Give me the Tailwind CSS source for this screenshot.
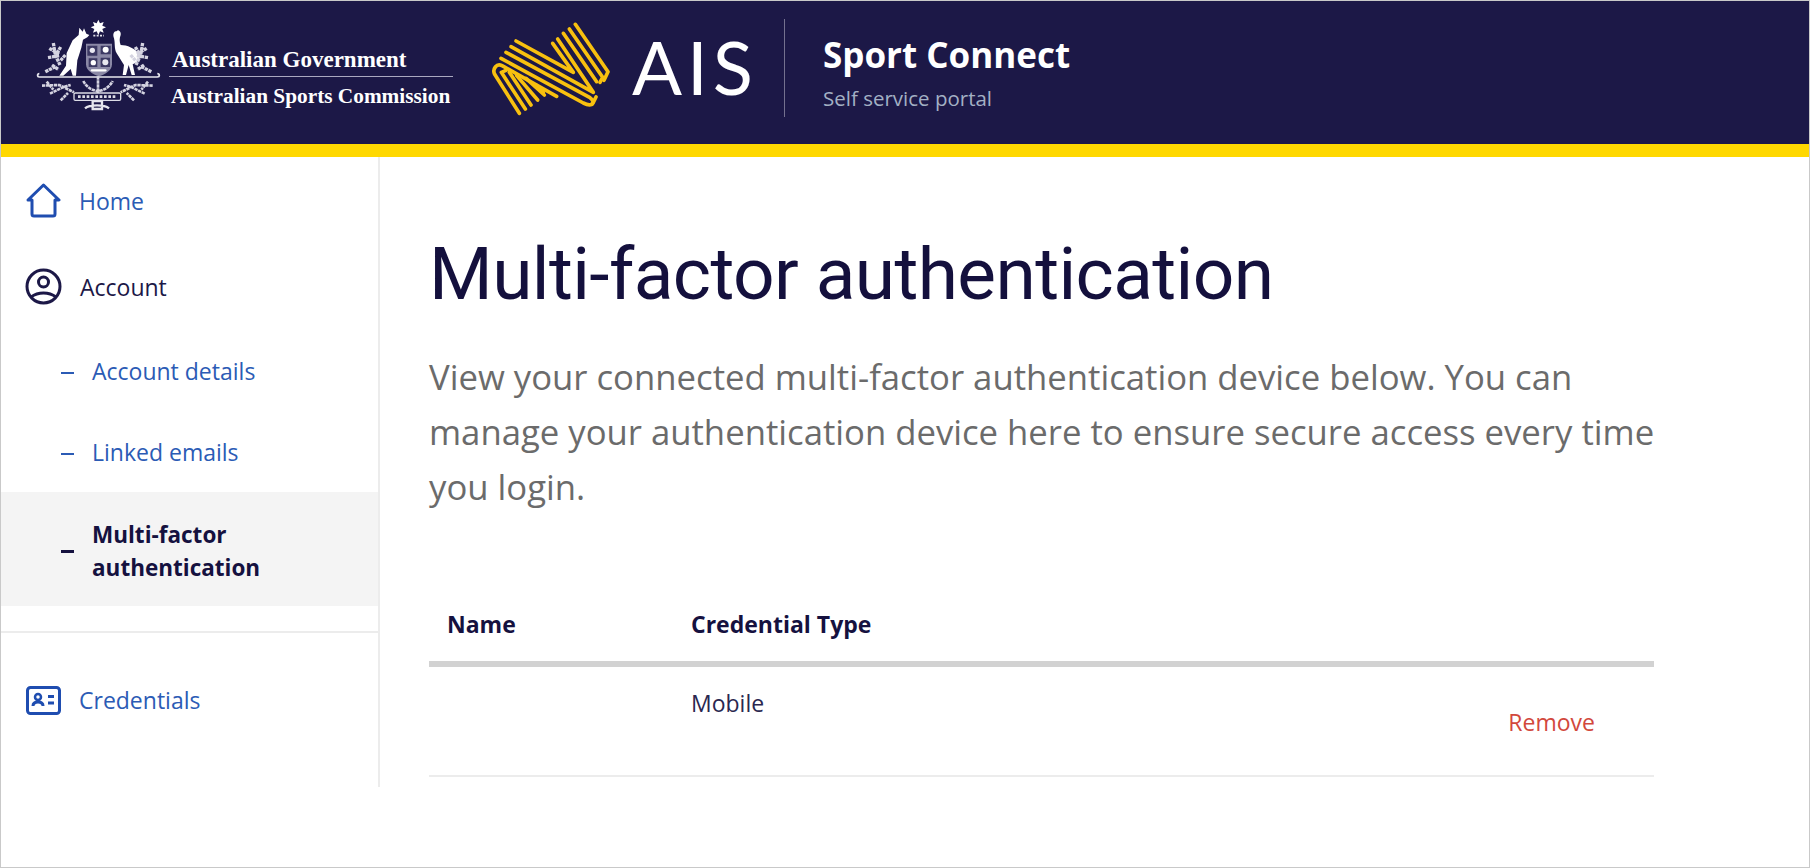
<!doctype html>
<html lang="en">
<head>
<meta charset="utf-8">
<title>Sport Connect</title>
<script src="https://cdn.jsdelivr.net/npm/@tailwindcss/browser@4"></script>
</head>
<body class="bg-white font-['Open_Sans','Noto_Sans',sans-serif]">
<div class="w-[1810px] h-[868px] border border-[#c9c9c9] overflow-hidden flex flex-col">
  <header class="h-[143px] shrink-0 bg-[#1c1847] flex items-center pl-[29px]">
    <svg class="w-[135px] h-[100px] shrink-0 -mt-[15px] blur-[0.5px]" viewBox="0 0 405 300" fill="none">
      <path d="M205 14l5 11 11-4-4 11 11 5-11 5 4 11-11-4-5 11-5-11-11 4 4-11-11-5 11-5-4-11 11 4z" fill="#fff"/>
      <path d="M190 62h32" stroke="#e4e4ec" stroke-width="5" stroke-dasharray="6 4"/>
      <path d="M148 38l10 12 4-10 7 16 9 4-6 7-13 7-5 24-12 38-4 46h-10l-6-20-22 20H88l20-30 2-38 18-38 18-16z" fill="#fff"/>
      <path d="M262 48c-12 0-14 10-10 22 4 15 0 30 8 45l22 35-4 30h10l8-30 9 30h10l-7-32c19-8 26-18 19-30-10-18-37-28-55-28-4-10-4-20 0-30 2-8-4-14-10-14z" fill="#fff"/>
      <path d="M168 86h78v62c0 18-20 30-39 36-19-6-39-18-39-36z" fill="#8b89a6"/>
      <path d="M172 92h30v30h-30zM212 92h30v26h-30zM176 130h26v26h-26zM212 128h28v28h-28z" fill="#3c3963"/>
      <circle cx="187" cy="106" r="8" fill="#e8e8f0"/><circle cx="227" cy="104" r="9" fill="#fff"/><circle cx="190" cy="143" r="8" fill="#fff"/><circle cx="226" cy="142" r="9" fill="#e8e8f0"/><path d="M186 166h40" stroke="#fff" stroke-width="7" stroke-linecap="round"/>
      <path d="M28 176c-7 0-7 10 0 10h354c8 0 8-10 0-10" stroke="#e6e6ee" stroke-width="5"/>
      <path d="M70 84l6 36 14 30M58 100l30 18M92 96l-14 24M54 128l34-6M46 170l32-16M106 120l-14 16M66 150l20 14M338 84l-6 36-14 30M350 100l-30 18M316 96l14 24M354 128l-34-6M364 170l-32-16M302 120l14 16M342 150l-20 14" stroke="#d4d3e0" stroke-width="10" stroke-dasharray="10 2"/>
      <path d="M36 212l52-2 44 22M60 236l40-20 22-6M92 256l22-22M50 200l20 24M368 212l-52-2-44 22M344 236l-40-20-22-6M312 256l-22-22M354 200l-20 24M204 184v60M160 198c10 20 30 30 44 30 14 0 34-10 44-30" stroke="#d4d3e0" stroke-width="8" stroke-dasharray="10 2"/>
      <rect x="132" y="234" width="140" height="22" rx="4" fill="#1c1847" stroke="#dcdce6" stroke-width="4"/>
      <path d="M144 245h116" stroke="#dcdce6" stroke-width="8" stroke-dasharray="8 5"/>
      <path d="M165 280c14-12 58-12 72 0M188 258h28v24h-28z" stroke="#e6e6ee" stroke-width="7"/>
    </svg>
    <div class="ml-[4px] w-[284px] h-[64px] text-white font-['Liberation_Serif',serif] font-bold mt-[11px] shrink-0 flex flex-col">
      <div class="h-[31px] pl-[3px] text-[23px] leading-[28px] border-b border-[#aaa8c0] whitespace-nowrap">Australian Government</div>
      <div class="pl-[2px] pt-[5px] text-[21.300px] leading-[28px] whitespace-nowrap">Australian Sports Commission</div>
    </div>
    <svg class="w-[130px] h-[105px] ml-[33px] shrink-0 -mt-[10px] blur-[0.3px]" viewBox="0 0 390 315" fill="none" stroke="#f8c00f" stroke-width="11" stroke-linecap="round" stroke-linejoin="round">
      <path d="M90 78L262 172L200 85"/>
      <path d="M75 95L322 232L215 72"/>
      <path d="M60 112L312 248Q326 258 318 268"/>
      <path d="M45 130L292 264Q316 276 322 262L330 246"/>
      <path d="M232 55L332 200"/>
      <path d="M250 42L350 187L342 202"/>
      <path d="M268 28L366 170L354 196"/>
      <path d="M100 295L26 178Q20 166 28 156Q36 146 48 152L212 244"/>
      <path d="M118 282L46 172L60 166"/>
      <path d="M135 270L70 172"/>
      <path d="M155 255L92 182"/>
      <path d="M175 240L120 190"/>
      <path d="M150 210L172 232"/>
    </svg>
    <div class="ml-[16px] w-[118px] -mt-[12px] text-white text-[74px] leading-none font-['Lato',sans-serif] font-normal tracking-[5px] shrink-0">AIS</div>
    <div class="ml-[34px] w-px h-[98px] bg-[#74718f] -mt-[10px] shrink-0"></div>
    <div class="ml-[38px] mt-[2px]">
      <div class="text-white font-bold text-[35px] leading-[40px] whitespace-nowrap">Sport Connect</div>
      <div class="text-[#a3b0c4] text-[20.500px] leading-[28px] mt-[9px] whitespace-nowrap">Self service portal</div>
    </div>
  </header>
  <div class="h-[13px] shrink-0 bg-[#ffd800]"></div>
  <div class="flex items-start">
    <aside class="w-[379px] h-[630px] shrink-0 border-r-2 border-[#ececec] text-[23px]">
      <a class="h-[87px] pl-[25px] pt-[1px] flex items-center gap-[18px] text-[#2b5bb5]">
        <svg class="w-[35px] h-[35px] shrink-0 -mt-[1px]" viewBox="0 0 35 35" fill="none" stroke="#1f4db0" stroke-width="3" stroke-linejoin="round" stroke-linecap="round"><path d="M2 17L17.500 2 33 17h-4v14a2 2 0 0 1-2 2H8a2 2 0 0 1-2-2V17z"/></svg>
        <span>Home</span>
      </a>
      <a class="h-[85px] pl-[24px] pt-[2px] flex items-center gap-[18px] text-[#1c1847]">
        <svg class="w-[37px] h-[37px] shrink-0 -mt-[2px]" viewBox="0 0 37 37" fill="none" stroke="#1c1847" stroke-width="3"><circle cx="18.500" cy="18.500" r="16.500"/><circle cx="18.500" cy="14" r="5"/><path d="M6 29c4-3 8-4 12.500-4S27 26 31 29"/></svg>
        <span>Account</span>
      </a>
      <a class="h-[82px] pl-[60px] pt-[2px] flex items-center text-[#2b5bb5]">
        <span class="w-[13px] h-[2px] bg-[#2b5bb5] mr-[18px] mt-[3px]"></span><span>Account details</span>
      </a>
      <a class="h-[81px] pl-[60px] pt-[2px] flex items-center text-[#2b5bb5]">
        <span class="w-[13px] h-[2px] bg-[#2b5bb5] mr-[18px] mt-[3px]"></span><span>Linked emails</span>
      </a>
      <a class="h-[114px] pl-[60px] pt-[4px] flex items-center bg-[#f4f4f4] text-[#15113f] font-bold text-[22.500px]">
        <span class="w-[13px] h-[3px] bg-[#15113f] mr-[18px] shrink-0"></span><span class="leading-[33px]">Multi-factor<br>authentication</span>
      </a>
      <div class="mt-[25px] border-t-2 border-[#ececec]"></div>
      <a class="h-[134px] pl-[25px] flex items-center gap-[18px] text-[#2b5bb5]">
        <svg class="w-[35px] h-[29px] shrink-0" viewBox="0 0 35 29" fill="none" stroke="#1f4db0" stroke-width="3"><rect x="1.500" y="1.500" width="32" height="26" rx="3"/><circle cx="12" cy="11" r="3" stroke-width="2.500"/><path d="M7 20c0-3 2-4 5-4s5 1 5 4M22 10.500h6M22 17h6" stroke-width="3"/></svg>
        <span>Credentials</span>
      </a>
    </aside>
    <main class="w-[1225px] ml-[49px] shrink-0">
      <h1 class="mt-[72px] text-[73px] leading-[90px] tracking-[-0.6px] text-[#14103d] font-['Roboto',sans-serif] font-normal whitespace-nowrap">Multi-factor authentication</h1>
      <p class="mt-[30px] text-[34.700px] leading-[55px] text-[#6b6b6b] whitespace-nowrap">View your connected multi-factor authentication device below. You can<br>manage your authentication device here to ensure secure access every time<br>you login.</p>
      <div class="mt-[95px] h-[58px] border-b-[6px] border-[#d2d2d2] flex text-[23px] text-[#15113f] font-bold leading-[30px]">
        <div class="w-[262px] pl-[18px]">Name</div>
        <div>Credential Type</div>
      </div>
      <div class="h-[110px] border-b-2 border-[#ececec] flex text-[23px]">
        <div class="w-[262px]"></div>
        <div class="pt-[21px] leading-[30px] text-[#2a2750]">Mobile</div>
        <div class="ml-auto pt-[40px] pr-[59px] leading-[30px] text-[#d2483c]">Remove</div>
      </div>
    </main>
  </div>
</div>
</body>
</html>
